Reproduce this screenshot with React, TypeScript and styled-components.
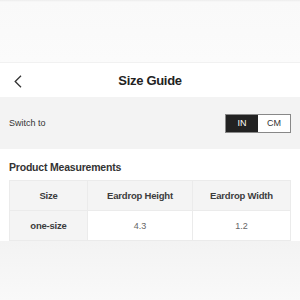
import React, { useState } from 'react';
import styled, { createGlobalStyle } from 'styled-components';

const GlobalStyle = createGlobalStyle`
  html, body {
    margin: 0;
    padding: 0;
    background: #f7f7f7;
  }
  body {
    font-family: "Liberation Sans", Arial, sans-serif;
    color: #222;
  }
`;

const rows = [{ size: 'one-size', height: '4.3', width: '1.2' }];

const App = () => {
  const [unit, setUnit] = useState<'IN' | 'CM'>('IN');

  return (
    <>
      <GlobalStyle />
      <StyledPage>
        <TopFade />
        <Header>
          <BackButton aria-label="Back">
            <svg width="8" height="13" viewBox="0 0 8 13" fill="none">
              <path d="M7 0.8 L1.2 6.5 L7 12.2" stroke="#333" strokeWidth="1.3" />
            </svg>
          </BackButton>
          <Title>Size Guide</Title>
        </Header>
        <SwitchBar>
          <SwitchLabel>Switch to</SwitchLabel>
          <UnitToggle>
            <UnitButton $active={unit === 'IN'} onClick={() => setUnit('IN')}>IN</UnitButton>
            <UnitButton $active={unit === 'CM'} onClick={() => setUnit('CM')}>CM</UnitButton>
          </UnitToggle>
        </SwitchBar>
        <Measurements>
          <SectionTitle>Product Measurements</SectionTitle>
          <Table>
            <thead>
              <tr>
                <HeadCell>Size</HeadCell>
                <HeadCell>Eardrop Height</HeadCell>
                <HeadCell>Eardrop Width</HeadCell>
              </tr>
            </thead>
            <tbody>
              {rows.map((row) => (
                <tr key={row.size}>
                  <HeadCell>{row.size}</HeadCell>
                  <ValueCell>{row.height}</ValueCell>
                  <ValueCell>{row.width}</ValueCell>
                </tr>
              ))}
            </tbody>
          </Table>
        </Measurements>
        <BottomFade />
      </StyledPage>
    </>
  );
};

const StyledPage = styled.div`
  width: 300px;
  height: 300px;
  display: flex;
  flex-direction: column;
  overflow: hidden;
  background: #f7f7f7;
`;

const TopFade = styled.div`
  height: 62px;
  flex-shrink: 0;
  background: linear-gradient(#ececec 0, #f9f9f9 2px, #fbfbfb 100%);
  border-bottom: 1px solid #f1f1f1;
`;

const Header = styled.div`
  height: 34px;
  flex-shrink: 0;
  background: #fff;
  display: flex;
  align-items: center;
  justify-content: center;
  position: relative;
`;

const BackButton = styled.button`
  position: absolute;
  left: 14px;
  top: 12px;
  border: none;
  background: none;
  padding: 0;
  display: flex;
`;

const Title = styled.h1`
  margin: 0;
  font-size: 13px;
  letter-spacing: -0.3px;
  font-weight: 700;
  color: #222;
`;

const SwitchBar = styled.div`
  height: 52px;
  flex-shrink: 0;
  background: #f3f3f3;
  display: flex;
  align-items: center;
  justify-content: space-between;
  padding: 0 9px;
  box-sizing: border-box;
`;

const SwitchLabel = styled.span`
  font-size: 9px;
  color: #333;
`;

const UnitToggle = styled.div`
  display: flex;
  border: 1px solid #888;
`;

const UnitButton = styled.button<{ $active: boolean }>`
  width: 32px;
  height: 17px;
  border: none;
  padding: 0;
  font-family: "Liberation Sans", Arial, sans-serif;
  font-size: 9px;
  background: ${(p) => (p.$active ? '#222' : '#fff')};
  color: ${(p) => (p.$active ? '#fff' : '#333')};
`;

const Measurements = styled.div`
  background: #fff;
  padding: 12px 9px 0 9px;
  flex-shrink: 0;
`;

const SectionTitle = styled.h2`
  margin: 0 0 7px 0;
  font-size: 10.5px;
  line-height: 12px;
  letter-spacing: -0.2px;
  font-weight: 700;
  color: #333;
`;

const Table = styled.table`
  width: 282px;
  border-collapse: collapse;
  table-layout: fixed;

  th:nth-child(1), td:nth-child(1) {
    width: 77px;
  }
  th:nth-child(2), td:nth-child(2) {
    width: 104px;
  }
`;

const HeadCell = styled.th`
  height: 29px;
  background: #f4f4f4;
  border: 1px solid #ebebeb;
  font-size: 9.5px;
  letter-spacing: -0.2px;
  font-weight: 700;
  color: #3c3c3c;
  text-align: center;
  padding: 0;
`;

const ValueCell = styled.td`
  height: 27px;
  background: #fff;
  border: 1px solid #ebebeb;
  font-size: 9px;
  color: #666;
  text-align: center;
  padding: 0;
`;

const BottomFade = styled.div`
  flex: 1;
  background: linear-gradient(#f3f3f3, #f9f9f9);
`;

export default App;
